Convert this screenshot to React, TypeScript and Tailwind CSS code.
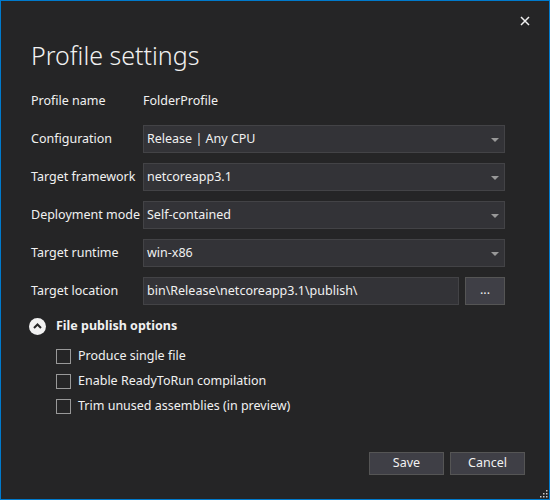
import React from "react";

const font = { fontFamily: '"Noto Sans", "Open Sans", sans-serif' };

function Arrow() {
  return (
    <svg width="8" height="5" viewBox="0 0 8 5" className="absolute right-[5px] top-[12px]">
      <path d="M0 0H8L4 4Z" fill="#999999" />
    </svg>
  );
}

function Select({ value }: { value: string }) {
  return (
    <div className="relative h-[28px] bg-[#333337] border border-[#434346] flex items-center pl-[3px] text-[#f1f1f1]">
      <span>{value}</span>
      <Arrow />
    </div>
  );
}

function Row({ label, children }: { label: string; children: React.ReactNode }) {
  return (
    <>
      <div className="flex items-center h-[28px] text-[#f1f1f1] whitespace-nowrap">{label}</div>
      <div>{children}</div>
    </>
  );
}

function Check({ label }: { label: string }) {
  return (
    <div className="flex items-center h-[25px] gap-[7px]">
      <div className="w-[15px] h-[15px] border border-[#999999] bg-[#252526]" />
      <span className="text-[#f1f1f1]">{label}</span>
    </div>
  );
}

export default function App() {
  return (
    <div
      style={font}
      className="relative w-[550px] h-[500px] bg-[#252526] border border-[#007acc] text-[12.5px] flex flex-col overflow-hidden"
    >
      <button className="absolute right-[18px] top-[14px] w-[12px] h-[12px] flex items-center justify-center">
        <svg width="10" height="10" viewBox="0 0 10 10">
          <path d="M1 1L9 9M9 1L1 9" stroke="#f1f1f1" strokeWidth="1.5" />
        </svg>
      </button>

      <div className="pl-[30px] pt-[38px] text-[25px] leading-[32px] text-[#f1f1f1] font-light">
        Profile settings
      </div>

      <div className="pl-[30px] pr-[44px] pt-[16px] grid grid-cols-[112px_1fr] gap-y-[10px]">
        <Row label="Profile name">
          <div className="h-[28px] flex items-center text-[#f1f1f1]">FolderProfile</div>
        </Row>
        <Row label="Configuration">
          <Select value="Release | Any CPU" />
        </Row>
        <Row label="Target framework">
          <Select value="netcoreapp3.1" />
        </Row>
        <Row label="Deployment mode">
          <Select value="Self-contained" />
        </Row>
        <Row label="Target runtime">
          <Select value="win-x86" />
        </Row>
        <Row label="Target location">
          <div className="flex gap-[6px]">
            <div className="flex-1 h-[28px] bg-[#333337] border border-[#434346] flex items-center pl-[3px] text-[#f1f1f1]">
              bin\Release\netcoreapp3.1\publish\
            </div>
            <button className="w-[40px] h-[28px] bg-[#3f3f46] border border-[#555555] text-[#f1f1f1] flex items-center justify-center pb-[2px]">
              ...
            </button>
          </div>
        </Row>
      </div>

      <div className="pl-[28px] pt-[5px] flex items-center gap-[10px] h-[32px] box-content">
        <div className="w-[17px] h-[17px] rounded-full bg-[#f1f1f1] flex items-center justify-center">
          <svg width="9" height="6" viewBox="0 0 9 6">
            <path d="M1 5L4.5 1.5L8 5" stroke="#252526" strokeWidth="2" fill="none" />
          </svg>
        </div>
        <span className="font-bold text-[#f1f1f1]">File publish options</span>
      </div>

      <div className="pl-[55px] pt-[2px] flex flex-col">
        <Check label="Produce single file" />
        <Check label="Enable ReadyToRun compilation" />
        <Check label="Trim unused assemblies (in preview)" />
      </div>

      <div className="flex-1" />

      <div className="flex justify-end gap-[6px] pr-[24px] pb-[24px]">
        <button className="w-[75px] h-[23px] bg-[#3f3f46] border border-[#555555] text-[#f1f1f1] flex items-center justify-center">
          Save
        </button>
        <button className="w-[75px] h-[23px] bg-[#3f3f46] border border-[#555555] text-[#f1f1f1] flex items-center justify-center">
          Cancel
        </button>
      </div>

      <svg width="10" height="10" viewBox="0 0 10 10" className="absolute right-[1px] bottom-[1px]">
        {[
          [8, 2], [8, 5], [5, 5], [8, 8], [5, 8], [2, 8],
        ].map(([x, y], i) => (
          <rect key={i} x={x} y={y} width="1.5" height="1.5" fill="#cccccc" />
        ))}
      </svg>
    </div>
  );
}
